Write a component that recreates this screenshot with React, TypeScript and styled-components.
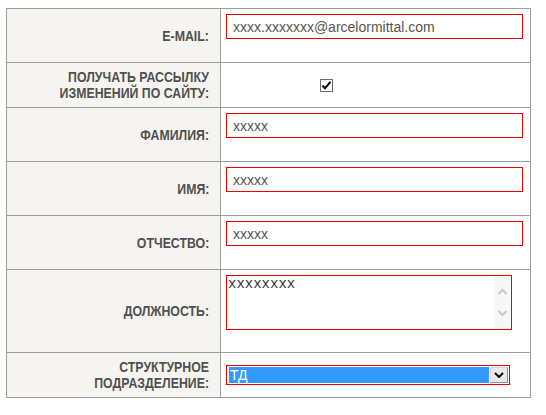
import React from "react";
import styled, { createGlobalStyle } from "styled-components";

const GlobalStyle = createGlobalStyle`
  html, body {
    margin: 0;
    padding: 0;
    background: #ffffff;
    font-family: "Liberation Sans", Arial, sans-serif;
  }
`;

const Form = styled.div`
  display: grid;
  grid-template-columns: 213px 309px;
  grid-template-rows: 53px 44px 53px 53px 53px 82px 44px;
  gap: 1px;
  padding: 1px;
  margin: 8px 0 0 6px;
  width: max-content;
  background: #9d9d9d;
`;

const Label = styled.div`
  display: flex;
  align-items: center;
  justify-content: flex-end;
  text-align: right;
  padding: 0 11px 0 8px;
  background: #f6f4f0;
  color: #505050;
  font-family: "Liberation Sans", Arial, sans-serif;
  font-size: 14px;
  font-weight: bold;
  line-height: 16px;
  text-transform: uppercase;
`;

// the source uses a narrow bold face; squeeze the regular one to match
const Narrow = styled.span`
  display: inline-block;
  transform: scaleX(0.88);
  transform-origin: right center;
`;

const Cell = styled.div<{ $center?: boolean; $indent?: number }>`
  display: flex;
  align-items: ${(p) => (p.$center ? "center" : "flex-start")};
  padding: ${(p) => (p.$center ? "0" : "5px")} 0 0 ${(p) => p.$indent ?? 5}px;
  background: #ffffff;
`;

const TextInput = styled.input`
  box-sizing: border-box;
  width: 297px;
  height: 25px;
  margin: 0;
  padding: 0 6px;
  border: 1px solid #ee0000;
  outline: none;
  background: #ffffff;
  color: #555555;
  font-family: "Liberation Sans", Arial, sans-serif;
  font-size: 14px;
`;

const CheckBox = styled.span`
  box-sizing: border-box;
  display: inline-flex;
  align-items: center;
  justify-content: center;
  width: 13px;
  height: 13px;
  border: 1px solid #6e6e6e;
  background: #ffffff;
`;

const AreaBox = styled.div`
  box-sizing: border-box;
  display: flex;
  width: 286px;
  height: 55px;
  border: 1px solid #ee0000;
  background: #ffffff;
`;

const Area = styled.textarea`
  flex: 1;
  margin: 0;
  padding: 0 1px;
  border: none;
  outline: none;
  resize: none;
  overflow: hidden;
  background: transparent;
  color: #333333;
  font-family: "Liberation Mono", "Courier New", monospace;
  font-size: 14px;
  line-height: 16px;
`;

const ScrollTrack = styled.div`
  width: 17px;
  background: #f7f7f7;
`;

const SelectBox = styled.div`
  box-sizing: border-box;
  display: flex;
  gap: 1px;
  width: 284px;
  height: 20px;
  padding: 1px 1px 1px 2px;
  border: 1px solid #ee0000;
  background: #ffffff;
`;

const Selected = styled.div`
  flex: 1;
  display: flex;
  align-items: center;
  padding-left: 1px;
  background: #3399ff;
  color: #ffffff;
  font-size: 14px;
`;

const DropButton = styled.div`
  box-sizing: border-box;
  display: flex;
  align-items: center;
  justify-content: center;
  width: 18px;
  border: 1px solid;
  border-color: #d4d4d4 #8c8c8c #8c8c8c #d4d4d4;
  background: #e8e8e8;
`;

const fields = [
  { label: "E-mail:", value: "xxxx.xxxxxxx@arcelormittal.com" },
];

const names = [
  { label: "Фамилия:", value: "xxxxx" },
  { label: "Имя:", value: "xxxxx" },
  { label: "Отчество:", value: "xxxxx" },
];

export default function App() {
  return (
    <>
      <GlobalStyle />
      <Form>
        {fields.map((f) => (
          <React.Fragment key={f.label}>
            <Label><Narrow>{f.label}</Narrow></Label>
            <Cell>
              <TextInput defaultValue={f.value} />
            </Cell>
          </React.Fragment>
        ))}

        <Label><Narrow>Получать рассылку изменений по сайту:</Narrow></Label>
        <Cell $center $indent={99}>
          <CheckBox>
            <svg width="11" height="11" viewBox="0 0 11 11">
              <path d="M1.5 5.5 L4 8.2 L9.5 1.8" fill="none" stroke="#000" strokeWidth="2" />
            </svg>
          </CheckBox>
        </Cell>

        {names.map((f) => (
          <React.Fragment key={f.label}>
            <Label><Narrow>{f.label}</Narrow></Label>
            <Cell>
              <TextInput defaultValue={f.value} />
            </Cell>
          </React.Fragment>
        ))}

        <Label><Narrow>Должность:</Narrow></Label>
        <Cell>
          <AreaBox>
            <Area defaultValue="xxxxxxxx" />
            <ScrollTrack>
              <svg width="17" height="53" viewBox="0 0 17 53">
                <path d="M4.5 18 L8.5 14 L12.5 18" fill="none" stroke="#c6c6c6" strokeWidth="2" />
                <path d="M4.5 35 L8.5 39 L12.5 35" fill="none" stroke="#c6c6c6" strokeWidth="2" />
              </svg>
            </ScrollTrack>
          </AreaBox>
        </Cell>

        <Label><Narrow>Структурное подразделение:</Narrow></Label>
        <Cell $center>
          <SelectBox>
            <Selected>ТД</Selected>
            <DropButton>
              <svg width="10" height="6" viewBox="0 0 10 6">
                <path d="M1 1 L5 5 L9 1" fill="none" stroke="#000" strokeWidth="2" />
              </svg>
            </DropButton>
          </SelectBox>
        </Cell>
      </Form>
    </>
  );
}
